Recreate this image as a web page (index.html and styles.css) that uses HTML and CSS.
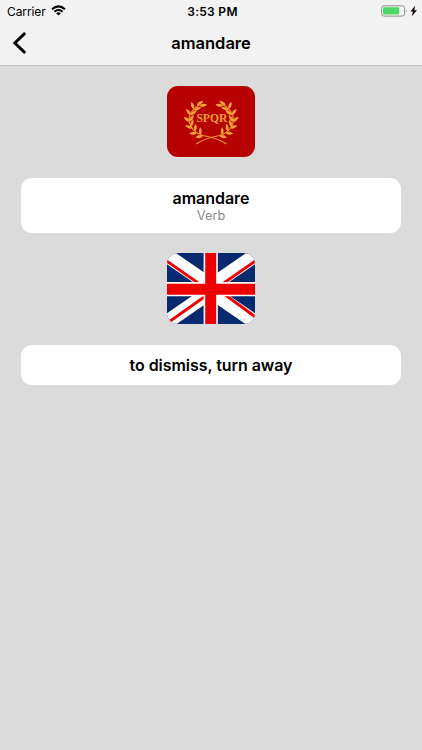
FILE: index.html
```html
<!DOCTYPE html>
<html lang="en">
<head>
<meta charset="utf-8">
<title>amandare</title>
<link rel="stylesheet" href="styles.css">
</head>
<body>
<header class="header">
  <div class="status">
    <div class="status-left"><span class="carrier">Carrier</span>
      <svg class="wifi" viewBox="0 0 15 11" width="15" height="11"><g fill="none" stroke="#000" stroke-width="2.100"><path d="M1 4.200Q7.500-1.600 14 4.200"/><path d="M3.400 6.800Q7.500 3.200 11.600 6.800"/></g><path d="M5.200 8.200Q7.500 6.400 9.800 8.200L7.500 10.600Z"/></svg>
    </div>
    <span class="time">3:53 PM</span>
    <div class="status-right">
      <svg viewBox="0 0 37 12" width="37" height="12"><rect x=".6" y=".8" width="23" height="10.300" rx="2.500" fill="#f7f7f7" stroke="#8e8e8e"/><rect x="2" y="2.300" width="16.200" height="7.300" rx="1" fill="#4cd964"/><path d="M25 4.200q1.600 1.700 0 3.500z" fill="#8e8e8e"/><path d="M34.200 .8L29.500 6.500H32L30.800 11.200L36 5.200H33.300Z"/></svg>
    </div>
  </div>
  <nav class="nav">
    <svg class="back" viewBox="0 0 14 22" width="14" height="22"><path d="M12.300 1.900L2.800 11L12.300 20.100" fill="none" stroke="#000" stroke-width="2.900" stroke-linecap="round"/></svg>
    <h1 class="title">amandare</h1>
    <span></span>
  </nav>
</header>
<main class="content">
  <svg class="flag" viewBox="0 0 88 71">
    <defs>
      <path id="leaf" d="M0 0C1.200-2.400 4.200-3 7.600-1.600C5.400 .9 2.400 1.300 0 0Z"/>
      <g id="branch">
        <path d="M33 18.500Q22 24 22 35Q24 46 36 49.500Q50 52 59.500 58" fill="none" stroke="#e9952f" stroke-width="1.200"/>
        <g fill="#f0a136">
          <use href="#leaf" transform="translate(32.500 20) rotate(0)"/>
          <use href="#leaf" transform="translate(30 19.500) rotate(-25)"/>
          <use href="#leaf" transform="translate(27 24) rotate(-8)"/>
          <use href="#leaf" transform="translate(27 23) rotate(-100)"/>
          <use href="#leaf" transform="translate(24 29) rotate(-28)"/>
          <use href="#leaf" transform="translate(24 29) rotate(-118)"/>
          <use href="#leaf" transform="translate(22.500 35.500) rotate(-45)"/>
          <use href="#leaf" transform="translate(23 35.500) rotate(-132)"/>
          <use href="#leaf" transform="translate(24 41) rotate(-62)"/>
          <use href="#leaf" transform="translate(25.500 42) rotate(-150)"/>
          <use href="#leaf" transform="translate(28 45.500) rotate(-72)"/>
          <use href="#leaf" transform="translate(30 46.800) rotate(-175)"/>
          <use href="#leaf" transform="translate(33.500 49) rotate(-80)"/>
          <use href="#leaf" transform="translate(36 49.700) rotate(178)"/>
        </g>
      </g>
    </defs>
    <rect width="88" height="71" fill="#b70000"/>
    <use href="#branch"/>
    <use href="#branch" transform="translate(88.500 0) scale(-1 1)"/>
    <text class="spqr" x="29.400" y="36" textLength="31" lengthAdjust="spacingAndGlyphs">SPQR</text>
  </svg>
  <section class="card card-word"><h2 class="word">amandare</h2><p class="kind">Verb</p></section>
  <svg class="flag" viewBox="0 0 88 71">
    <rect width="88" height="71" fill="#062a70"/>
    <path d="M-8-3L44 32.900L96-3M-8 74.500L44 38.600L96 74.500" fill="none" stroke="#fff" stroke-width="14.200"/>
    <path d="M-6 4L44 39L94 4M-6 74.500L44 39.200M44 31.500L94 68" fill="none" stroke="#ee0000" stroke-width="2.900"/>
    <path d="M43.700 0V71M0 36.200H88" stroke="#fff" stroke-width="14.200"/>
    <path d="M43.700 0V71M0 36.200H88" stroke="#ee0000" stroke-width="11"/>
  </svg>
  <section class="card card-meaning"><h2 class="word">to dismiss, turn away</h2></section>
</main>
</body>
</html>
```
FILE: styles.css
```css
* { box-sizing: border-box; }
body {
  margin: 0;
  min-height: 750px;
  background: #dbdbdb;
  color: #000;
  font-family: Inter, "Liberation Sans", sans-serif;
}
.header {
  height: 66px;
  background: #f2f2f2;
  border-bottom: 1px solid #bfbfbf;
}
.status {
  display: grid;
  grid-template-columns: 1fr auto 1fr;
  align-items: center;
  height: 22px;
  padding: 0 4px 0 7px;
}
.status-left { display: flex; align-items: center; gap: 5px; }
.wifi { margin-bottom: 1px; }
.carrier { font-size: 12px; letter-spacing: -.1px; }
.time { font-size: 12px; font-weight: 600; letter-spacing: .3px; }
.status-right { display: flex; justify-content: flex-end; }
.nav {
  display: grid;
  grid-template-columns: 1fr auto 1fr;
  align-items: center;
  height: 42px;
  padding: 0 12px;
}
.title, .word {
  margin: 0;
  font-size: 16.5px;
  line-height: 20px;
  font-weight: 600;
}
.word { font-size: 16px; letter-spacing: -.05px; }
.content {
  display: flex;
  flex-direction: column;
  align-items: center;
  padding: 20px 21px 0;
}
.flag {
  display: block;
  width: 88px;
  height: 71px;
  border-radius: 11px;
}
.spqr {
  font-family: "Liberation Serif", serif;
  font-size: 12px;
  font-weight: bold;
  fill: #f0a136;
}
.card {
  width: 380px;
  margin: 21px 0 20px;
  border-radius: 11px;
  background: #fff;
  text-align: center;
}
.card-word { height: 55px; padding-top: 10px; }
.card-meaning { height: 40px; padding-top: 10px; }
.kind {
  margin: 0;
  color: #8b8b8b;
  font-size: 12.8px;
  line-height: 15px;
}
```
